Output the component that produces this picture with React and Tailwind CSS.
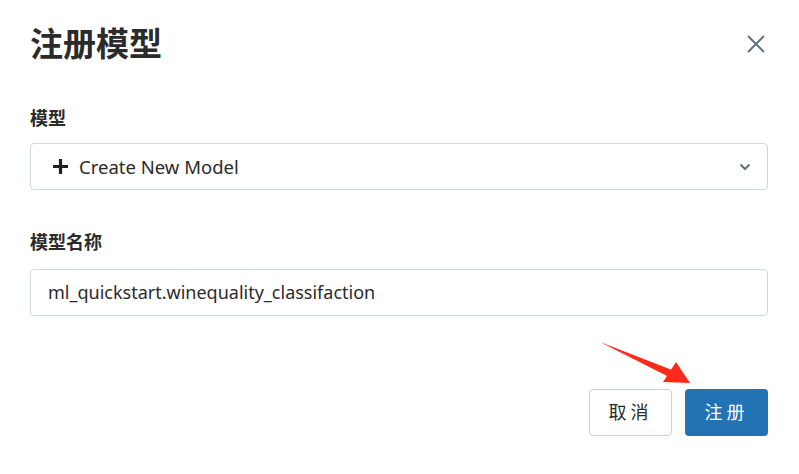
import React from 'react';

const cjk = { fontFamily: '"Noto Sans", "Noto Sans CJK SC", sans-serif' };

const App = () => {
    return (
        <div className="relative w-[799px] h-[474px] overflow-hidden bg-white text-[#333]" style={cjk}>
            <div className="pl-[30px] pr-[31px]">
                {/* header */}
                <div className="flex items-center justify-between h-[40px] mt-[24px]">
                    <h2 className="text-[33px] font-bold leading-[40px] text-[#2b2b2b]">注册模型</h2>
                    <button className="w-[24px] h-[24px] flex items-center justify-center text-[#5f7281]">
                        <svg width="20" height="20" viewBox="0 0 20 20" fill="none" stroke="currentColor" strokeWidth="2">
                            <path d="M2 2L18 18M18 2L2 18" />
                        </svg>
                    </button>
                </div>

                {/* model select */}
                <label className="block mt-[42px] text-[18px] font-bold leading-[24px] text-[#2b2b2b]">模型</label>
                <div className="mt-[13px] h-[47px] flex items-center justify-between border border-[#d1d9e1] rounded-[4px] pl-[22px] pr-[16px]">
                    <div className="flex items-center">
                        <svg width="15" height="15" viewBox="0 0 16 16" fill="#1f1f1f">
                            <path d="M6.3 0h3.4v6.3H16v3.4H9.7V16H6.3V9.7H0V6.3h6.3z" />
                        </svg>
                        <span className="ml-[11px] text-[18.5px] text-[#2b2b2b]">Create New Model</span>
                    </div>
                    <svg width="12" height="8" viewBox="0 0 12 8" fill="none" stroke="#5f7281" strokeWidth="2">
                        <path d="M1.5 1.5L6 6l4.5-4.5" />
                    </svg>
                </div>

                {/* model name */}
                <label className="block mt-[40px] text-[18px] font-bold leading-[24px] text-[#2b2b2b]">模型名称</label>
                <div className="mt-[15px] h-[47px] flex items-center border border-[#d1d9e1] rounded-[4px] px-[17px]">
                    <span className="text-[18px] text-[#2b2b2b]">ml_quickstart.winequality_classifaction</span>
                </div>

                {/* footer */}
                <div className="mt-[73px] flex justify-end gap-[13px]">
                    <button className="w-[83px] h-[47px] border border-[#c5d1dc] rounded-[4px] bg-white text-[18px] text-[#2b2b2b] tracking-[4px]">
                        取消
                    </button>
                    <button className="w-[83px] h-[47px] rounded-[4px] bg-[#2272b4] text-[18px] text-white tracking-[4px]">
                        注册
                    </button>
                </div>
            </div>

            {/* annotation arrow */}
            <svg className="absolute left-0 top-0 pointer-events-none" width="799" height="474">
                <path d="M600 342 L672 370 L669 377 Z" fill="#ff2a1a" />
                <path d="M690 383 L663 382 L676 362 Z" fill="#ff2a1a" />
            </svg>
        </div>
    );
};

export default App;
